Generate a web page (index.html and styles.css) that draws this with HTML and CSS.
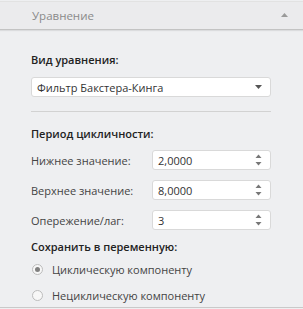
FILE: index.html
```
<!DOCTYPE html>
<html lang="ru">
<head>
    <meta charset="UTF-8">
    <meta name="viewport" content="width=device-width, initial-scale=1.0">
    <title>Уравнение</title>
    <link rel="stylesheet" href="styles.css">
</head>
<body>
    <div class="panel">
        <div class="panel-header">
            <span class="panel-title">Уравнение</span>
            <svg class="collapse-icon" width="7" height="4" viewBox="0 0 7 4"><path d="M0 4 L3.5 0 L7 4 Z" fill="#9a9a9a"/></svg>
        </div>

        <div class="panel-body">
            <div class="heading">Вид уравнения:</div>
            <div class="select">
                <span>Фильтр Бакстера-Кинга</span>
                <svg width="7" height="4" viewBox="0 0 7 4"><path d="M0 0 L7 0 L3.5 4 Z" fill="#555"/></svg>
            </div>

            <div class="divider"></div>

            <div class="heading heading-period">Период цикличности:</div>
            <div class="fields">
                <div class="field">
                    <label>Нижнее значение:</label>
                    <div class="spin">
                        <span>2,0000</span>
                        <div class="spin-arrows">
                            <svg width="7" height="5" viewBox="0 0 7 5"><path d="M0.5 4 L3.5 0.5 L6.5 4 Z" fill="#777"/></svg>
                            <svg width="7" height="5" viewBox="0 0 7 5"><path d="M0.5 1 L6.5 1 L3.5 4.5 Z" fill="#777"/></svg>
                        </div>
                    </div>
                </div>
                <div class="field">
                    <label>Верхнее значение:</label>
                    <div class="spin">
                        <span>8,0000</span>
                        <div class="spin-arrows">
                            <svg width="7" height="5" viewBox="0 0 7 5"><path d="M0.5 4 L3.5 0.5 L6.5 4 Z" fill="#777"/></svg>
                            <svg width="7" height="5" viewBox="0 0 7 5"><path d="M0.5 1 L6.5 1 L3.5 4.5 Z" fill="#777"/></svg>
                        </div>
                    </div>
                </div>
                <div class="field">
                    <label>Опережение/лаг:</label>
                    <div class="spin">
                        <span>3</span>
                        <div class="spin-arrows">
                            <svg width="7" height="5" viewBox="0 0 7 5"><path d="M0.5 4 L3.5 0.5 L6.5 4 Z" fill="#777"/></svg>
                            <svg width="7" height="5" viewBox="0 0 7 5"><path d="M0.5 1 L6.5 1 L3.5 4.5 Z" fill="#777"/></svg>
                        </div>
                    </div>
                </div>
            </div>

            <div class="heading heading-save">Сохранить в переменную:</div>
            <div class="radios">
                <div class="radio">
                    <span class="radio-dot checked"></span>
                    <span>Циклическую компоненту</span>
                </div>
                <div class="radio">
                    <span class="radio-dot"></span>
                    <span>Нециклическую компоненту</span>
                </div>
            </div>
        </div>
    </div>
</body>
</html>
```

FILE: styles.css
```
body {
    margin: 0;
    padding-top: 1px;
    font-family: "Open Sans", "Liberation Sans", sans-serif;
    font-size: 11px;
    color: #333;
    background: #eeeff1;
}

.panel {
    height: 307px;
    border-bottom: 1px solid #c9c9c9;
    box-sizing: border-box;
}

.panel-header {
    height: 27px;
    border-top: 1px solid #e2e2e2;
    border-bottom: 1px solid #c3c3c3;
    box-shadow: 0 1px 1px rgba(0, 0, 0, 0.08);
    background: #ebebed;
    display: flex;
    align-items: center;
    justify-content: space-between;
    padding: 0 15px 0 32px;
}

.panel-title {
    color: #8a8a8a;
    font-size: 11.5px;
}

.collapse-icon {
    margin-bottom: 2px;
}

.panel-body {
    padding: 22px 32px 0 31px;
    display: flex;
    flex-direction: column;
}

.heading {
    font-weight: 600;
    line-height: 16px;
    color: #222;
}

.select {
    margin-top: 9px;
    height: 20px;
    box-sizing: border-box;
    background: #fff;
    border: 1px solid #d9d9d9;
    border-radius: 3px;
    display: flex;
    align-items: center;
    justify-content: space-between;
    padding: 0 8px 0 5px;
}

.divider {
    margin-top: 14px;
    height: 1px;
    background: #d2d2d2;
}

.heading-period {
    margin-top: 14px;
}

.fields {
    margin-top: 8px;
    display: flex;
    flex-direction: column;
    gap: 10px;
}

.field {
    display: flex;
    align-items: center;
    height: 20px;
}

.field label {
    width: 121px;
    color: #444;
}

.spin {
    flex: 1;
    height: 20px;
    box-sizing: border-box;
    background: #fff;
    border: 1px solid #d9d9d9;
    border-radius: 3px;
    display: flex;
    align-items: center;
    justify-content: space-between;
    padding: 0 8px 0 5px;
}

.spin-arrows {
    display: flex;
    flex-direction: column;
    gap: 2px;
}

.spin-arrows svg {
    display: block;
}

.heading-save {
    margin-top: 9px;
}

.radios {
    margin-top: 4px;
    display: flex;
    flex-direction: column;
    gap: 6px;
}

.radio {
    height: 20px;
    display: flex;
    align-items: center;
    gap: 9px;
    color: #444;
}

.radio-dot {
    width: 11px;
    height: 11px;
    margin-left: 1px;
    box-sizing: border-box;
    border-radius: 50%;
    border: 1px solid #bcbcbc;
    background: #f7f7f7;
    display: flex;
    align-items: center;
    justify-content: center;
}

.radio-dot.checked::after {
    content: "";
    width: 5px;
    height: 5px;
    border-radius: 50%;
    background: #808080;
}
```
